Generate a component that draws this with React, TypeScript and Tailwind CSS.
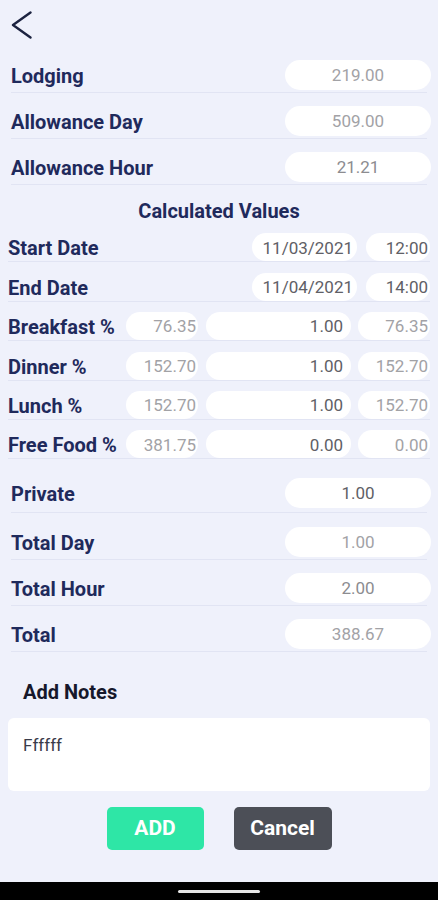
import React from "react";

const labelCls = "text-[20px] font-bold text-[#1f2a5c] leading-[28px] whitespace-nowrap pt-[2px]";

function Row1({ label, value, tone, pt, pb }: { label: string; value: string; tone: string; pt: string; pb: string }) {
  return (
    <div className={`ml-[11px] mr-[11px] flex items-center border-b border-[#e1e4f3] ${pt} ${pb}`}>
      <span className={`flex-1 ${labelCls}`}>{label}</span>
      <div className={`w-[146px] h-[30px] -mr-[4px] rounded-full bg-white flex items-center justify-center pt-[1px] text-[17px] ${tone}`}>
        {value}
      </div>
    </div>
  );
}

function Pill({ w, value, tone, pr, ml }: { w: string; value: string; tone: string; pr: string; ml?: string }) {
  return (
    <div className={`${w} ${ml ?? ""} h-[28px] rounded-full bg-white flex items-center justify-end pt-[2px] ${pr} text-[17px] ${tone}`}>
      {value}
    </div>
  );
}

function Row2({ label, children }: { label: string; children: React.ReactNode }) {
  return (
    <div className="mx-[8px] h-[39.4px] flex items-end border-b border-[#e1e4f3]">
      <div className="flex items-center w-full h-[28px]">
        <span className={`flex-1 ${labelCls}`}>{label}</span>
        {children}
      </div>
    </div>
  );
}

const light = "text-[#a2a2a6]";
const mid = "text-[#8c8c90]";
const dark = "text-[#606066]";

export default function App() {
  return (
    <div className="w-[438px] h-[900px] bg-[#eff1fb] flex flex-col [font-family:Roboto,'Noto_Sans',sans-serif] overflow-hidden">
      <div className="pt-[11px] pl-[11px]">
        <svg width="22" height="28" viewBox="0 0 22 28" fill="none">
          <polyline points="19.5,1.5 2,14 19.5,26.5" stroke="#1c2340" strokeWidth="2.4" strokeLinecap="round" strokeLinejoin="round" />
        </svg>
      </div>
      <div className="mt-[8px]">
        <Row1 label="Lodging" value="219.00" tone={light} pt="pt-[13px]" pb="pb-[2px]" />
        <Row1 label="Allowance Day" value="509.00" tone={light} pt="pt-[13px]" pb="pb-[2px]" />
        <Row1 label="Allowance Hour" value="21.21" tone={mid} pt="pt-[13px]" pb="pb-[2px]" />
      </div>
      <div className="mt-[14px] text-center text-[20px] font-bold leading-[24px] text-[#1f2a5c]">Calculated Values</div>
      <div>
        <Row2 label="Start Date">
          <Pill w="w-[105px]" value="11/03/2021" tone={dark} pr="pr-[4px]" />
          <Pill w="w-[64px]" ml="ml-[9px]" value="12:00" tone={dark} pr="pr-[2px]" />
        </Row2>
        <Row2 label="End Date">
          <Pill w="w-[105px]" value="11/04/2021" tone={dark} pr="pr-[4px]" />
          <Pill w="w-[64px]" ml="ml-[9px]" value="14:00" tone={dark} pr="pr-[2px]" />
        </Row2>
        <Row2 label="Breakfast %">
          <Pill w="w-[72px]" value="76.35" tone={light} pr="pr-[2px]" />
          <Pill w="w-[145px]" ml="ml-[8px]" value="1.00" tone={dark} pr="pr-[8px]" />
          <Pill w="w-[72px]" ml="ml-[7px]" value="76.35" tone={light} pr="pr-[2px]" />
        </Row2>
        <Row2 label="Dinner %">
          <Pill w="w-[72px]" value="152.70" tone={light} pr="pr-[2px]" />
          <Pill w="w-[145px]" ml="ml-[8px]" value="1.00" tone={dark} pr="pr-[8px]" />
          <Pill w="w-[72px]" ml="ml-[7px]" value="152.70" tone={light} pr="pr-[2px]" />
        </Row2>
        <Row2 label="Lunch %">
          <Pill w="w-[72px]" value="152.70" tone={light} pr="pr-[2px]" />
          <Pill w="w-[145px]" ml="ml-[8px]" value="1.00" tone={dark} pr="pr-[8px]" />
          <Pill w="w-[72px]" ml="ml-[7px]" value="152.70" tone={light} pr="pr-[2px]" />
        </Row2>
        <Row2 label="Free Food %">
          <Pill w="w-[72px]" value="381.75" tone={light} pr="pr-[2px]" />
          <Pill w="w-[145px]" ml="ml-[8px]" value="0.00" tone={dark} pr="pr-[8px]" />
          <Pill w="w-[72px]" ml="ml-[7px]" value="0.00" tone={light} pr="pr-[2px]" />
        </Row2>
      </div>
      <div>
        <Row1 label="Private" value="1.00" tone={dark} pt="pt-[19px]" pb="pb-[4px]" />
        <Row1 label="Total Day" value="1.00" tone={light} pt="pt-[14px]" pb="pb-[2px]" />
        <Row1 label="Total Hour" value="2.00" tone={mid} pt="pt-[13px]" pb="pb-[2px]" />
        <Row1 label="Total" value="388.67" tone={light} pt="pt-[13px]" pb="pb-[2px]" />
      </div>
      <div className="mt-[28px] pl-[23px] text-[20px] font-bold leading-[24px] text-[#16182b]">Add Notes</div>
      <div className="mt-[14px] mx-[8px] h-[73px] rounded-[6px] bg-white pt-[16px] pl-[15px] text-[17px] leading-[22px] text-[#3a3b4a]">
        Ffffff
      </div>
      <div className="mt-[16px] flex justify-center gap-[30px]">
        <button className="w-[97px] h-[43px] rounded-[5px] bg-[#2ee6a6] text-white text-[21px] font-bold">ADD</button>
        <button className="w-[98px] h-[43px] rounded-[5px] bg-[#4c4f57] text-white text-[21px] font-bold">Cancel</button>
      </div>
      <div className="mt-auto h-[18px] bg-black flex justify-center pt-[8px]">
        <div className="w-[82px] h-[3px] rounded-full bg-[#e6e6e6]" />
      </div>
    </div>
  );
}
